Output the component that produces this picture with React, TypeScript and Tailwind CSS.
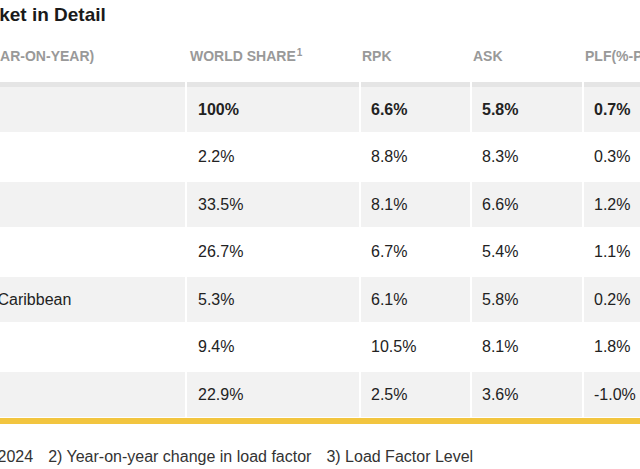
const rows = [
  { region: "World", share: "100%", rpk: "6.6%", ask: "5.8%", plf: "0.7%", bold: true },
  { region: "Africa", share: "2.2%", rpk: "8.8%", ask: "8.3%", plf: "0.3%" },
  { region: "Asia Pacific", share: "33.5%", rpk: "8.1%", ask: "6.6%", plf: "1.2%" },
  { region: "Europe", share: "26.7%", rpk: "6.7%", ask: "5.4%", plf: "1.1%" },
  { region: "Latin America & Caribbean", share: "5.3%", rpk: "6.1%", ask: "5.8%", plf: "0.2%" },
  { region: "Middle East", share: "9.4%", rpk: "10.5%", ask: "8.1%", plf: "1.8%" },
  { region: "North America", share: "22.9%", rpk: "2.5%", ask: "3.6%", plf: "-1.0%" },
]

const cols = "grid grid-cols-[315px_172px_109px_110px_120px] gap-x-[2px]"

export default function App() {
  return (
    <div
      className="h-[469px] w-[640px] overflow-hidden bg-white text-[#222]"
      style={{ fontFamily: "'Liberation Sans', Arial, sans-serif" }}
    >
      <div className="ml-[-130px] w-[840px]">
        <h2 className="ml-[-6px] h-[30px] text-[19px] font-bold leading-[30px] text-[#1a1a1a]">
          Passenger Market in Detail
        </h2>

        <div className={cols}>
          {["PASSENGER (YEAR-ON-YEAR)", "WORLD SHARE", "RPK", "ASK", "PLF(%-PT)"].map((h, i) => (
            <div
              key={h}
              className={`h-[57px] border-b-[5px] border-[#e5e5e5] pt-[16px] text-[14px] font-bold leading-[20px] whitespace-nowrap text-[#999] ${i === 0 ? "pl-[16px]" : i === 1 ? "pl-[3px]" : "pl-[1px]"}`}
            >
              {h}
              {i === 1 && <sup className="ml-[1px] text-[10px]">1</sup>}
              {i === 4 && <sup className="ml-[1px] text-[10px]">2</sup>}
            </div>
          ))}
        </div>

        <div className={`${cols} gap-y-[2.5px]`}>
          {rows.map((r, idx) => {
            const bg = idx % 2 === 0 ? "bg-[#f2f2f2]" : "bg-white"
            return [r.region, r.share, r.rpk, r.ask, r.plf].map((v, j) => (
              <div
                key={`${idx}-${j}`}
                className={`flex h-[45px] items-center text-[16px] whitespace-nowrap ${j < 2 ? "pl-[11px]" : "pl-[10px]"} ${bg} ${r.bold ? "font-bold" : ""}`}
              >
                {v}
              </div>
            ))
          })}
        </div>

        <div className="mt-[1px] h-[6px] bg-[#f2c53f]" />

        <p className="ml-[-53px] mt-[23px] flex gap-[15px] text-[16px] leading-[20px] text-[#333] whitespace-nowrap">
          <span>1) Share of total RPKs in 2024</span>
          <span>2) Year-on-year change in load factor</span>
          <span>3) Load Factor Level</span>
        </p>
      </div>
    </div>
  )
}
